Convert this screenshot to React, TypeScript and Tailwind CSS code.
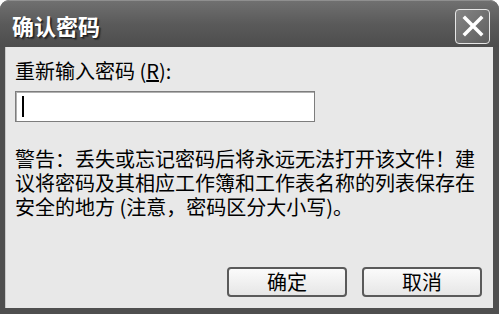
import React from "react";

export default function App() {
  const font = { fontFamily: '"Noto Sans CJK SC", "Noto Sans", sans-serif' };
  return (
    <div
      className="w-[499px] h-[314px] flex flex-col rounded-t-[9px] bg-[#4f4f4f] overflow-hidden"
      style={font}
    >
      {/* Title bar */}
      <div className="h-[47px] flex items-center justify-between pl-[12px] pr-[9px] bg-gradient-to-b from-[#707070] via-[#5a5a5a] to-[#4d4d4d] border-t border-[#8f8f8f] rounded-t-[9px]">
        <span
          className="text-[22px] font-bold text-white leading-none mt-[1px]"
          style={{ textShadow: "1px 1px 0 #222, 2px 2px 1px #333" }}
        >
          确认密码
        </span>
        <div className="w-[35px] h-[35px] rounded-[4px] border border-[#e6e6e6] bg-gradient-to-br from-[#858585] to-[#5e5e5e] flex items-center justify-center mt-[4px]">
          <svg width="22" height="22" viewBox="0 0 22 22">
            <path d="M3 3 L19 19 M19 3 L3 19" stroke="#ffffff" strokeWidth="3.5" strokeLinecap="square" />
          </svg>
        </div>
      </div>
      {/* Body */}
      <div className="flex-1 ml-[5px] mr-[6px] mb-[6px] bg-[#e8e8e8] flex flex-col pl-[9px] border-l border-[#c8c8c8]">
        <div className="mt-[12px] text-[20px] leading-[24px] text-black">
          重新输入密码 (<span className="underline">R</span>):
        </div>
        <div className="mt-[8px] w-[300px] h-[31px] bg-white border border-[#7d7d7d] shadow-[inset_1px_1px_0_#b0b0b0] flex items-center pl-[6px]">
          <div className="w-[2px] h-[21px] bg-black" />
        </div>
        <div className="mt-[25px] text-[20px] leading-[24px] text-black whitespace-nowrap">
          <div className="h-[24px]">警告：丢失或忘记密码后将永远无法打开该文件！建</div>
          <div className="h-[24px]">议将密码及其相应工作簿和工作表名称的列表保存在</div>
          <div className="h-[24px]">安全的地方 (注意，密码区分大小写)。</div>
        </div>
        <div className="mt-auto mb-[11px] flex justify-end gap-[15px] pr-[11px]">
          <button className="w-[120px] h-[30px] rounded-[4px] border-2 border-[#5a5a5a] bg-gradient-to-b from-[#fbfbfb] to-[#e6e6e6] text-[20px] leading-none text-black flex items-center justify-center">
            确定
          </button>
          <button className="w-[120px] h-[30px] rounded-[4px] border-2 border-[#5a5a5a] bg-gradient-to-b from-[#fbfbfb] to-[#e6e6e6] text-[20px] leading-none text-black flex items-center justify-center">
            取消
          </button>
        </div>
      </div>
    </div>
  );
}
